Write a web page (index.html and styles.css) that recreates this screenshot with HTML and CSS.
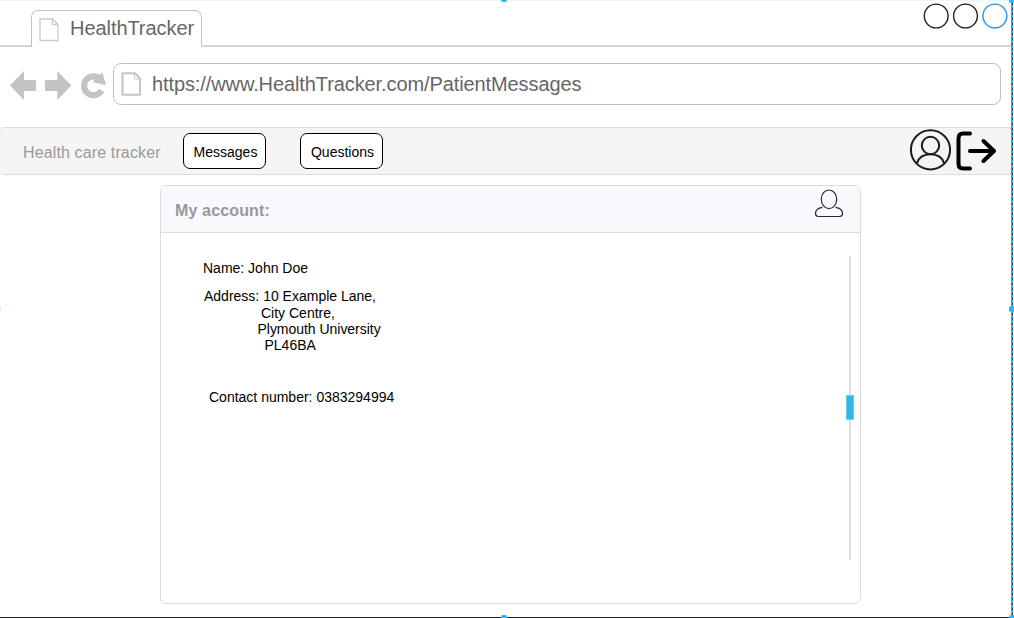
FILE: index.html
```html
<!DOCTYPE html>
<html lang="en">
<head>
<meta charset="utf-8">
<title>HealthTracker</title>
<link rel="stylesheet" href="styles.css">
</head>
<body>
<div class="window">
  <header class="tabs">
    <div class="tab-line tab-line-start"></div>
    <div class="tab">
      <svg class="tab-icon" width="20" height="24" viewBox="0 0 20 24"><path d="M1 1H13.5L19 6.5V22.5H1Z M13.5 1V6.5H19" fill="#fff" stroke="#cbcbcb" stroke-width="1.3"/></svg>
      <span>HealthTracker</span>
    </div>
    <div class="tab-line tab-line-end">
      <svg width="86" height="27" viewBox="0 0 86 27" fill="none" stroke="#222" stroke-width="1.400">
        <circle cx="13.200" cy="13" r="11.900"/>
        <circle cx="42.500" cy="13" r="11.900"/>
        <circle cx="71.900" cy="13" r="11.900" stroke="#2196f3"/>
      </svg>
    </div>
  </header>
  <div class="toolbar">
    <svg class="nav" width="97" height="32" viewBox="0 0 97 32" fill="#c3c3c3">
      <path d="M0 15.500L14 1V10H26V21H14V30Z"/>
      <path d="M61.300 15.500L47.300 1V10H35V21H47.300V30Z"/>
      <path d="M91.600 20.500A9.400 9.400 0 1 1 89.800 8.800" fill="none" stroke="#c3c3c3" stroke-width="6.200"/>
      <path d="M82.300 12L92.300 2.300L96 15.300Z"/>
    </svg>
    <div class="address">
      <svg width="21" height="24" viewBox="0 0 21 24"><path d="M1.500 1.300H14L19 6.500V22.800H1.500Z" fill="#fff" stroke="#c5c5c5" stroke-width="2"/><path d="M13.500 1.500V7H19" fill="none" stroke="#cbcbcb"/></svg>
      <span>https://www.HealthTracker.com/PatientMessages</span>
    </div>
  </div>
  <nav class="appbar">
    <span class="brand">Health care tracker</span>
    <a class="button">Messages</a>
    <a class="button">Questions</a>
    <svg class="app-icons" width="90" height="44" viewBox="0 0 90 44" fill="none" stroke="#1c1c1c" stroke-width="2">
      <circle cx="21.500" cy="21.800" r="19.600"/>
      <circle cx="21.500" cy="17.500" r="8.700"/>
      <path d="M7.800 35.500C9.500 29.500 14 26.200 21.500 26.200S33.500 29.500 35.200 35.500"/>
      <g stroke="#000" stroke-width="4" stroke-linecap="round" stroke-linejoin="round">
        <path d="M61 5.500H54Q49.500 5.500 49.500 10.500V35.500Q49.500 40.500 54 40.500H61"/>
        <path d="M61 23H85M74.500 13L85 23L74.500 33"/>
      </g>
    </svg>
  </nav>
  <main class="card">
    <div class="card-head">
      <h1>My account:</h1>
      <svg class="person" width="30" height="30" viewBox="0 0 30 30" fill="none" stroke="#2b2b2b" stroke-width="1.200">
        <path d="M8.500 18.300C3 19 1.500 21 1.500 24.500Q1.500 27.500 4.500 27.500H25.500Q28.500 27.500 28.500 24.500C28.500 21 27 19 21.500 18.300"/>
        <ellipse cx="15" cy="10.300" rx="7.700" ry="9.300"/>
      </svg>
    </div>
    <div class="card-body">
      <div class="details">
        <p class="name">Name: John Doe</p>
        <div class="postal">
          <p class="street">Address: 10 Example Lane,</p>
          <p class="city">City Centre,</p>
          <p class="campus">Plymouth University</p>
          <p class="postcode">PL46BA</p>
        </div>
        <p class="contact">Contact number: 0383294994</p>
      </div>
      <div class="scroll"><div class="track"></div><div class="thumb"></div></div>
    </div>
  </main>
  <div class="edge-top"></div>
  <div class="edge-right"></div>
  <div class="edge-bottom"></div>
  <i class="handle top"></i><i class="handle right-top"></i><i class="handle right"></i><i class="handle corner"></i><i class="handle bottom"></i><i class="handle left"></i>
</div>
</body>
</html>
```

FILE: styles.css
```css
* { box-sizing: border-box; }
body { margin: 0; background: #fff; font-family: "Liberation Sans", Arial, sans-serif; color: #000; }
.window { position: relative; width: 1014px; height: 618px; overflow: hidden; }
svg { display: block; flex: none; }
p, h1 { margin: 0; }

.tabs { display: flex; height: 47px; width: 1011px; }
.tab-line { border-bottom: 2px solid #d5d5d5; }
.tab-line-start { width: 32px; }
.tab { width: 171px; margin: 10px 0 0 -1px; height: 37px; border: 1px solid #c4c4c4; border-bottom: 0; border-radius: 7px 7px 0 0; display: flex; padding: 6px 0 0 7px; font-size: 20px; line-height: 22px; color: #666; }
.tab span { margin: 0 0 0 11px; letter-spacing: -.06px; }
.tab-icon { margin-top: 1px; }
.tab-line-end { flex: 1; margin-left: -1px; display: flex; justify-content: flex-end; padding: 3px 2px 0 0; }

.toolbar { display: flex; height: 80px; padding: 16px 0 0 10px; }
.nav { margin-top: 7px; }
.address { display: flex; width: 888px; height: 42px; margin-left: 6px; border: 1px solid #c0c0c0; border-radius: 8px; padding: 8px 0 0 7px; font-size: 20px; line-height: 24px; color: #666; }
.address span { margin-left: 10px; white-space: nowrap; letter-spacing: -.1px; }

.appbar { display: flex; width: 1012px; height: 48px; border: 1px solid #ddd; border-left: 0; border-radius: 4px; background: #f5f5f5; }
.brand { width: 183px; padding-left: 23px; font-size: 16px; line-height: 49px; color: #999; letter-spacing: .13px; }
.button { width: 83px; height: 36px; margin: 5px 34px 0 0; border: 1px solid #000; border-radius: 7px; background: #fff; text-align: center; font-size: 14px; line-height: 36px; padding-left: 2px; }
.app-icons { margin: 0 12px 0 auto; }

.card { width: 701px; height: 419px; margin: 10px 0 0 160px; border: 1px solid #dcdcdc; border-radius: 6px; overflow: hidden; }
.card-head { display: flex; justify-content: space-between; height: 47px; padding: 0 16px 0 14px; background: #faf7fd; border-bottom: 1px solid #dcdcdc; }
.card-head h1 { font-size: 16px; line-height: 49px; color: #999; letter-spacing: .15px; }
.person { margin-top: 3px; }
.card-body { display: flex; justify-content: space-between; height: 370px; padding: 23px 6px 0 42px; }
.details { font-size: 14px; line-height: 16px; padding-top: 4px; }
.postal { margin: 12px 0 0 1px; }
.city { margin: 1px 0 0 57px; }
.campus { margin-left: 53.500px; letter-spacing: -.03px; }
.postcode { margin-left: 60.500px; }
.contact { margin: 36px 0 0 6px; }
.scroll { position: relative; width: 8px; height: 304px; }
.track { width: 2px; height: 304px; margin: 0 auto; background: #ddd; }
.thumb { position: absolute; left: 0; top: 139px; width: 8px; height: 25px; background: #35b5e5; border: 1px solid #65cdf2; }

.edge-top { position: absolute; left: 0; top: 0; width: 1012px; height: 1px; background: #e9f8fd; }
.edge-right { position: absolute; left: 1011px; top: 0; width: 2px; height: 618px; border-left: 1px solid #888; background: repeating-linear-gradient(#29a9e8 0 3px, #303030 3px 5px); }
.edge-bottom { position: absolute; left: 0; top: 617px; width: 1012px; height: 1px; background: #222; }
.handle { position: absolute; width: 6px; height: 6px; border-radius: 2px; background: #29b6f6; }
.top { left: 501px; top: -4px; }
.right-top { left: 1009px; top: -3px; }
.right { left: 1009px; top: 306px; }
.corner { left: 1009px; top: 615px; }
.bottom { left: 501px; top: 615px; }
.left { left: -5px; top: 306px; background: #d5f3fd; }
```
